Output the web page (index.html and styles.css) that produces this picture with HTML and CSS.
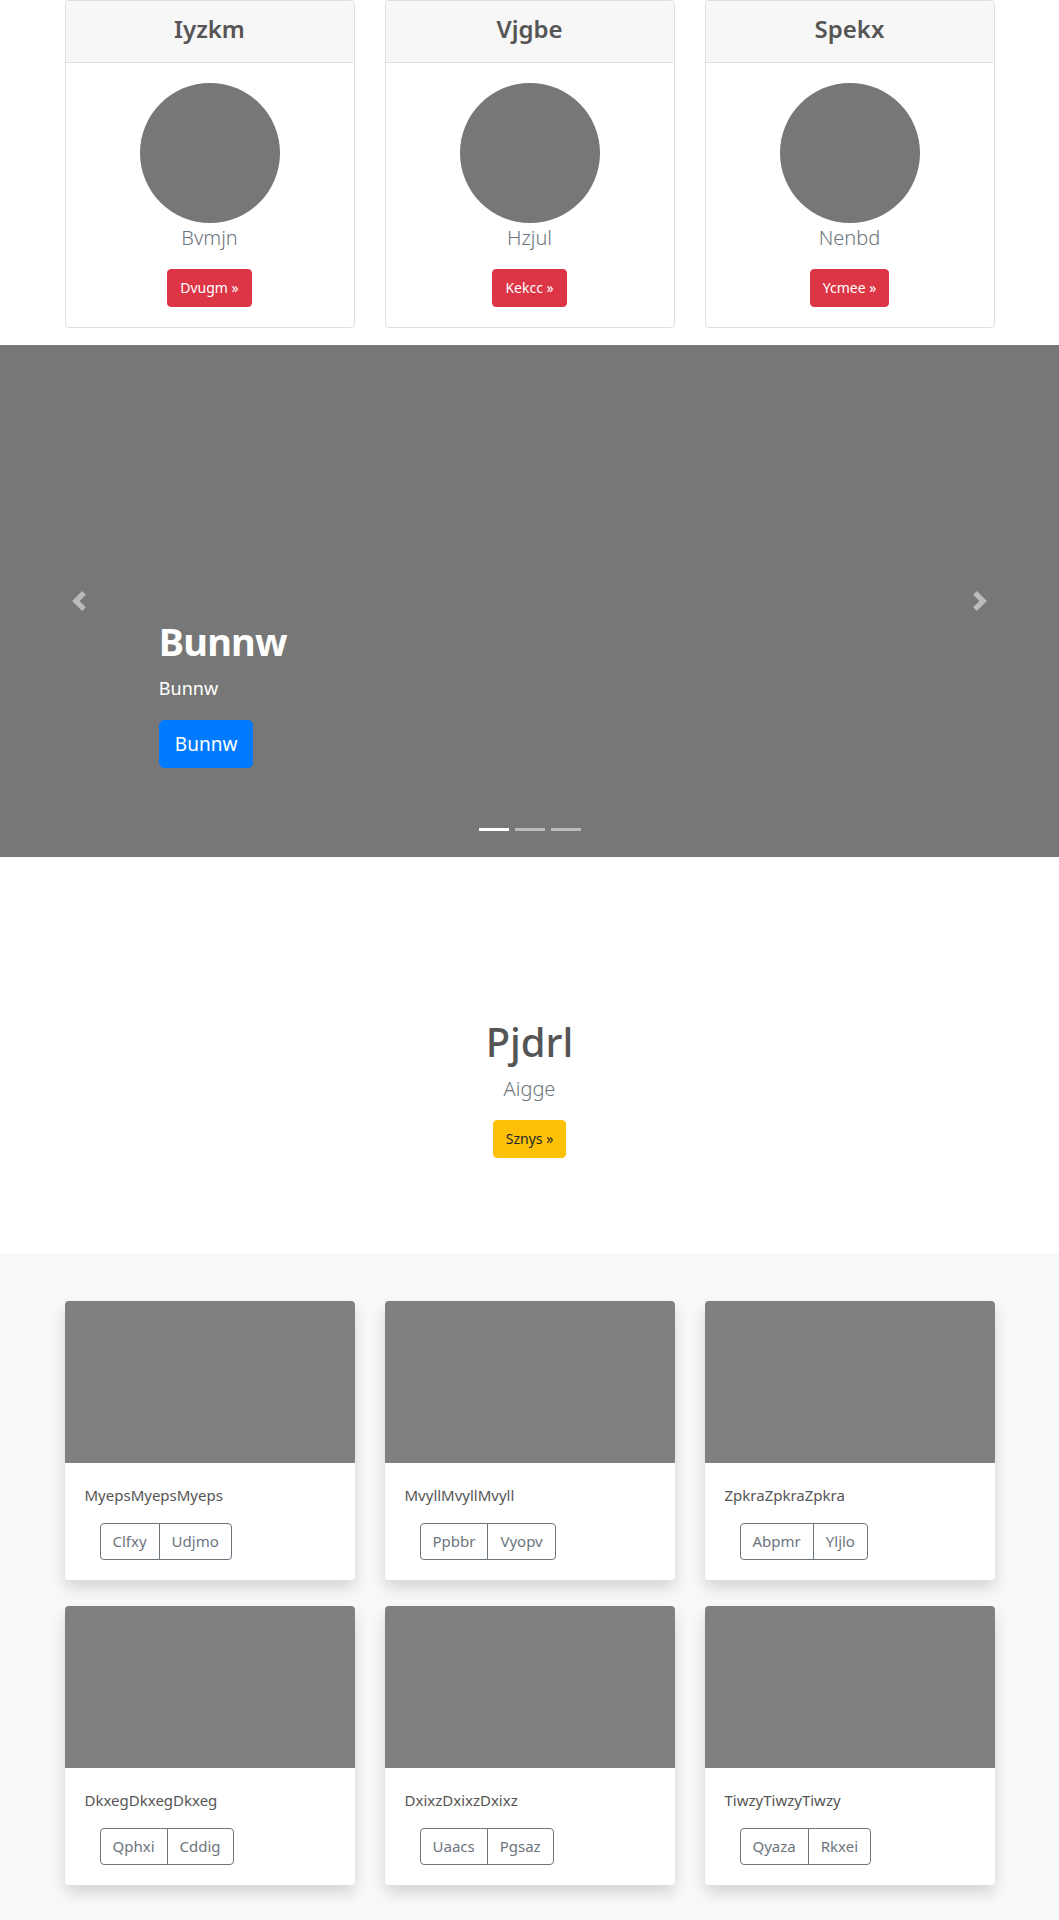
FILE: index.html
```html
<!DOCTYPE html>
<html lang="en">
<head>
<meta charset="utf-8">
<title>Page</title>
<link rel="stylesheet" href="styles.css">
</head>
<body>
<section class="pricing">
  <div class="container grid3">
    <div class="p-card">
      <div class="p-head"><h4>Iyzkm</h4></div>
      <div class="p-body">
        <div class="avatar"></div>
        <p class="lead">Bvmjn</p>
        <a class="btn btn-danger" href="#">Dvugm »</a>
      </div>
    </div>
    <div class="p-card">
      <div class="p-head"><h4>Vjgbe</h4></div>
      <div class="p-body">
        <div class="avatar"></div>
        <p class="lead">Hzjul</p>
        <a class="btn btn-danger" href="#">Kekcc »</a>
      </div>
    </div>
    <div class="p-card">
      <div class="p-head"><h4>Spekx</h4></div>
      <div class="p-body">
        <div class="avatar"></div>
        <p class="lead">Nenbd</p>
        <a class="btn btn-danger" href="#">Ycmee »</a>
      </div>
    </div>
  </div>
</section>

<section class="carousel">
  <a class="ctrl ctrl-prev" href="#"><svg width="20" height="20" viewBox="0 0 8 8"><path fill="#fff" d="M5.25 0l-4 4 4 4 1.5-1.5L4.25 4l2.5-2.5L5.25 0z"/></svg></a>
  <div class="caption">
    <h1>Bunnw</h1>
    <p class="cap-sub">Bunnw</p>
    <a class="btn btn-primary btn-lg" href="#">Bunnw</a>
  </div>
  <a class="ctrl ctrl-next" href="#"><svg width="20" height="20" viewBox="0 0 8 8"><path fill="#fff" d="M2.75 0l-1.5 1.5L3.75 4l-2.5 2.5L2.75 8l4-4-4-4z"/></svg></a>
  <ol class="indicators">
    <li class="active"></li>
    <li></li>
    <li></li>
  </ol>
</section>

<section class="hero">
  <h1>Pjdrl</h1>
  <p class="lead">Aigge</p>
  <a class="btn btn-warning" href="#">Sznys »</a>
</section>

<section class="album">
  <div class="container grid3 album-grid">
    <div class="f-card">
      <div class="f-img"></div>
      <div class="f-body">
        <p>MyepsMyepsMyeps</p>
        <div class="btn-group"><button>Clfxy</button><button>Udjmo</button></div>
      </div>
    </div>
    <div class="f-card">
      <div class="f-img"></div>
      <div class="f-body">
        <p>MvyllMvyllMvyll</p>
        <div class="btn-group"><button>Ppbbr</button><button>Vyopv</button></div>
      </div>
    </div>
    <div class="f-card">
      <div class="f-img"></div>
      <div class="f-body">
        <p>ZpkraZpkraZpkra</p>
        <div class="btn-group"><button>Abpmr</button><button>Yljlo</button></div>
      </div>
    </div>
    <div class="f-card">
      <div class="f-img"></div>
      <div class="f-body">
        <p>DkxegDkxegDkxeg</p>
        <div class="btn-group"><button>Qphxi</button><button>Cddig</button></div>
      </div>
    </div>
    <div class="f-card">
      <div class="f-img"></div>
      <div class="f-body">
        <p>DxixzDxixzDxixz</p>
        <div class="btn-group"><button>Uaacs</button><button>Pgsaz</button></div>
      </div>
    </div>
    <div class="f-card">
      <div class="f-img"></div>
      <div class="f-body">
        <p>TiwzyTiwzyTiwzy</p>
        <div class="btn-group"><button>Qyaza</button><button>Rkxei</button></div>
      </div>
    </div>
  </div>
</section>
</body>
</html>
```

FILE: styles.css
```css
* { box-sizing: border-box; }
html, body { margin: 0; padding: 0; }
body {
  font-family: "Noto Sans", "Open Sans", "Liberation Sans", sans-serif;
  font-size: 16px;
  line-height: 1.5;
  color: #555;
  background: #fff;
}
h1, h4, p { margin: 0; }
a { text-decoration: none; }

.container {
  width: 960px;
  margin: 0 auto;
  padding: 0 15px;
}
.grid3 {
  display: grid;
  grid-template-columns: repeat(3, 290px);
  column-gap: 30px;
}

/* buttons */
.btn {
  display: inline-block;
  font-size: 14px;
  line-height: 21px;
  padding: 7.5px 12px;
  border: 1px solid transparent;
  border-radius: 4px;
  color: #fff;
}
.btn-danger { background: #dc3545; border-color: #dc3545; }
.btn-warning { background: #ffc107; border-color: #ffc107; color: #212529; }
.btn-primary { background: #007bff; border-color: #007bff; }
.btn-lg {
  font-size: 19px;
  line-height: 30px;
  padding: 8px 15px;
  border-radius: 5px;
}

/* pricing */
.pricing { padding-bottom: 17px; }
.p-card {
  border: 1px solid #dfdfdf;
  border-radius: 4px;
  background: #fff;
  overflow: hidden;
}
.p-head {
  background: #f7f7f7;
  border-bottom: 1px solid #dfdfdf;
  padding: 14px 20px 18px;
  text-align: center;
}
.p-head h4 {
  font-size: 24px;
  line-height: 28.8px;
  font-weight: 600;
  color: #555;
}
.p-body {
  padding: 20px;
  display: flex;
  flex-direction: column;
  align-items: center;
}
.avatar {
  width: 140px;
  height: 140px;
  border-radius: 50%;
  background: #777;
}
.lead {
  font-size: 20px;
  line-height: 30px;
  font-weight: 300;
  color: #6c757d;
  margin-bottom: 16px;
}

/* carousel */
.carousel {
  position: relative;
  height: 512px;
  background: #777;
}
.ctrl {
  position: absolute;
  top: 0;
  bottom: 0;
  width: 15%;
  display: flex;
  align-items: center;
  justify-content: center;
  opacity: 0.5;
}
.ctrl-prev { left: 0; }
.ctrl-next { right: 0; }
.ctrl svg { display: block; }
.caption {
  position: absolute;
  left: 15%;
  right: 15%;
  bottom: 89px;
  color: #fff;
}
.caption h1 {
  font-size: 38px;
  line-height: 46px;
  font-weight: 700;
  letter-spacing: -0.8px;
  margin-bottom: 11px;
}
.cap-sub {
  font-size: 18px;
  line-height: 27px;
  margin-bottom: 18px;
}
.indicators {
  position: absolute;
  left: 0;
  right: 0;
  bottom: 16px;
  margin: 0;
  padding: 0;
  list-style: none;
  display: flex;
  justify-content: center;
  gap: 6px;
}
.indicators li {
  width: 30px;
  height: 3px;
  background: #fff;
  opacity: 0.5;
  margin-bottom: 10px;
}
.indicators li.active { opacity: 1; }

/* hero */
.hero {
  padding: 161px 0 95px;
  text-align: center;
}
.hero h1 {
  font-size: 40px;
  line-height: 48px;
  font-weight: 500;
  color: #555;
  margin-bottom: 8px;
}
.hero .lead { margin-bottom: 16px; }

/* album */
.album {
  background: #f8f9fa;
  padding: 48px 0 48px;
}
.album-grid { row-gap: 26px; }
.f-card {
  background: #fff;
  border-radius: 4px;
  overflow: hidden;
  box-shadow: 0 8px 16px rgba(0, 0, 0, 0.15);
}
.f-img {
  height: 162px;
  background: #808080;
}
.f-body { padding: 20px; }
.f-body p {
  font-size: 15px;
  line-height: 24px;
  color: #555;
  margin-bottom: 16px;
}
.btn-group {
  display: inline-flex;
  margin-left: 15px;
}
.btn-group button {
  font-family: inherit;
  font-size: 15px;
  line-height: 23px;
  padding: 6px 12px;
  background: transparent;
  color: #6c757d;
  border: 1px solid #6c757d;
}
.btn-group button:first-child { border-radius: 4px 0 0 4px; }
.btn-group button:last-child { border-radius: 0 4px 4px 0; margin-left: -1px; }
```
